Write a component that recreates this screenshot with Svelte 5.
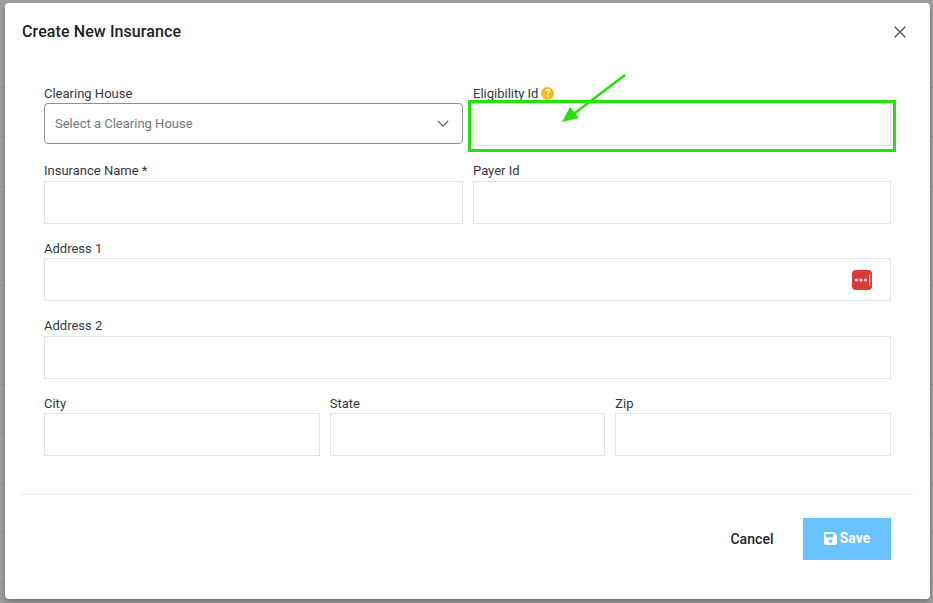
<script lang="ts">
	const cityRow = ['City', 'State', 'Zip'];
</script>

<div class="backdrop">
	<div class="modal">
		<header class="modal-header">
			<h2>Create New Insurance</h2>
			<button class="close" aria-label="Close">
				<svg viewBox="0 0 14 14" width="14" height="14">
					<path d="M1.5 1.5l11 11M12.5 1.5l-11 11" fill="none" stroke="#555" stroke-width="1.3" />
				</svg>
			</button>
		</header>

		<form class="form">
			<div class="row row-two">
				<div class="field">
					<label for="clearing">Clearing House</label>
					<div class="select" id="clearing">
						<span>Select a Clearing House</span>
						<svg viewBox="0 0 14 8" width="12" height="7">
							<path d="M1 1l6 6 6-6" fill="none" stroke="#555" stroke-width="1.4" />
						</svg>
					</div>
				</div>
				<div class="field">
					<label for="eligibility">
						Eligibility Id
						<span class="help">?</span>
					</label>
					<input id="eligibility" type="text" />
				</div>
			</div>

			<div class="row row-two">
				<div class="field">
					<label for="name">Insurance Name *</label>
					<input id="name" type="text" />
				</div>
				<div class="field">
					<label for="payer">Payer Id</label>
					<input id="payer" type="text" />
				</div>
			</div>

			<div class="field">
				<label for="address1">Address 1</label>
				<div class="input-wrap">
					<input id="address1" type="text" />
					<span class="lastpass">
						<svg viewBox="0 0 20 20" width="20" height="20">
							<circle cx="4.5" cy="10" r="1.5" fill="#fff" />
							<circle cx="9" cy="10" r="1.5" fill="#fff" />
							<circle cx="13.5" cy="10" r="1.5" fill="#fff" />
							<rect x="17" y="4.5" width="1.2" height="11" fill="#fff" />
						</svg>
					</span>
				</div>
			</div>

			<div class="field">
				<label for="address2">Address 2</label>
				<input id="address2" type="text" />
			</div>

			<div class="row row-three">
				{#each cityRow as name}
					<div class="field">
						<label for={name}>{name}</label>
						<input id={name} type="text" />
					</div>
				{/each}
			</div>
		</form>

		<footer class="modal-footer">
			<button class="btn-cancel" type="button">Cancel</button>
			<button class="btn-save" type="button">
				<svg viewBox="0 0 448 512" width="13" height="15">
					<path
						fill="#fff"
						d="M433.941 129.941l-83.882-83.882A48 48 0 0 0 316.118 32H48C21.49 32 0 53.49 0 80v352c0 26.51 21.49 48 48 48h352c26.51 0 48-21.49 48-48V163.882a48 48 0 0 0-14.059-33.941zM224 416c-35.346 0-64-28.654-64-64 0-35.346 28.654-64 64-64s64 28.654 64 64c0 35.346-28.654 64-64 64zm96-304.52V212c0 6.627-5.373 12-12 12H76c-6.627 0-12-5.373-12-12V108c0-6.627 5.373-12 12-12h228.52c3.183 0 6.235 1.264 8.485 3.515l3.48 3.48A11.996 11.996 0 0 1 320 111.48z"
					/>
				</svg>
				Save
			</button>
		</footer>

		<!-- annotation drawn over the screenshot -->
		<div class="highlight"></div>
		<svg class="arrow" viewBox="0 0 70 54" width="70" height="54">
			<path d="M66 1L12 42" stroke="#28e010" stroke-width="2.6" fill="none" />
			<path d="M3 48L11 33 20 44z" fill="#28e010" />
		</svg>
	</div>
</div>

<style>
	:global(body) {
		margin: 0;
	}

	.backdrop {
		box-sizing: border-box;
		width: 933px;
		height: 603px;
		padding: 3px 3px 4px 5px;
		background-color: #a0a0a0;
		/* table rows of the page behind the overlay */
		background-image: repeating-linear-gradient(
			to bottom,
			transparent 0 48.5px,
			rgba(0, 0, 0, 0.08) 48.5px 49.5px
		);
		background-position: 0 -11px;
		overflow: hidden;
		font-family: Roboto, 'Liberation Sans', sans-serif;
		color: #212529;
	}

	.modal {
		position: relative;
		box-sizing: border-box;
		height: 596px;
		background: #fff;
		border-radius: 4px;
		box-shadow: 0 3px 6px rgba(0, 0, 0, 0.3);
		display: flex;
		flex-direction: column;
	}

	.modal-header {
		display: flex;
		align-items: center;
		justify-content: space-between;
		padding: 19px 23px 0 17px;
		height: 20px;
	}

	.close {
		display: flex;
		padding: 0;
		margin-top: -1px;
		border: 0;
		background: none;
	}

	h2 {
		margin: 0;
		font-size: 16px;
		line-height: 20px;
		font-weight: 500;
		letter-spacing: 0.1px;
		color: #1c1f24;
	}

	.form {
		display: flex;
		flex-direction: column;
		gap: 16px;
		margin-top: 42.6px;
		padding: 0 39px;
	}

	.row {
		display: grid;
		column-gap: 10px;
	}
	.row-two {
		grid-template-columns: 419px 418px;
	}
	.row-three {
		grid-template-columns: repeat(3, 1fr);
	}

	label {
		display: flex;
		align-items: center;
		gap: 2px;
		height: 16px;
		padding-top: 1.2px;
		margin-bottom: 1.3px;
		font-size: 13px;
		line-height: 16px;
		color: #33373d;
	}

	input {
		display: block;
		box-sizing: border-box;
		width: 100%;
		height: 43px;
		padding: 0 10px;
		border: 1px solid #e2e4e7;
		border-radius: 0;
		background: #fff;
		outline: none;
	}

	.select {
		box-sizing: border-box;
		display: flex;
		align-items: center;
		justify-content: space-between;
		height: 41px;
		padding: 0 13px 0 10px;
		border: 1px solid #8d8f92;
		border-radius: 4px;
		font-size: 13px;
		color: #74777b;
	}

	.help {
		display: inline-flex;
		align-items: center;
		justify-content: center;
		width: 13px;
		height: 13px;
		margin-left: 1px;
		border-radius: 50%;
		background: #f7bb1c;
		color: #fff;
		font-size: 10px;
		font-weight: 700;
		line-height: 13px;
	}

	.input-wrap {
		position: relative;
	}

	.lastpass {
		position: absolute;
		top: 12px;
		right: 19px;
		display: flex;
		width: 20px;
		height: 20px;
		border-radius: 4px;
		background: #dc3a36;
	}

	.modal-footer {
		display: flex;
		align-items: center;
		justify-content: flex-end;
		margin: 38px 16px 0 16px;
		padding: 23px 23px 0 0;
		border-top: 1px solid #ebedef;
	}

	.btn-cancel {
		width: 72px;
		height: 42px;
		margin-right: 15px;
		padding-bottom: 2px;
		border: 0;
		background: none;
		font: 500 14px Roboto, sans-serif;
		letter-spacing: 0.05px;
		color: #23262d;
	}

	.btn-save {
		display: flex;
		align-items: center;
		justify-content: center;
		gap: 3px;
		width: 88px;
		height: 42px;
		padding: 0 0 2px 0;
		border: 0;
		background: #69c3ff;
		font: 700 14px Roboto, sans-serif;
		color: #fff;
	}

	.highlight {
		position: absolute;
		left: 463px;
		top: 97px;
		width: 428px;
		height: 52px;
		box-sizing: border-box;
		border: 3px solid #28e010;
	}

	.arrow {
		position: absolute;
		left: 554px;
		top: 71px;
	}
</style>
